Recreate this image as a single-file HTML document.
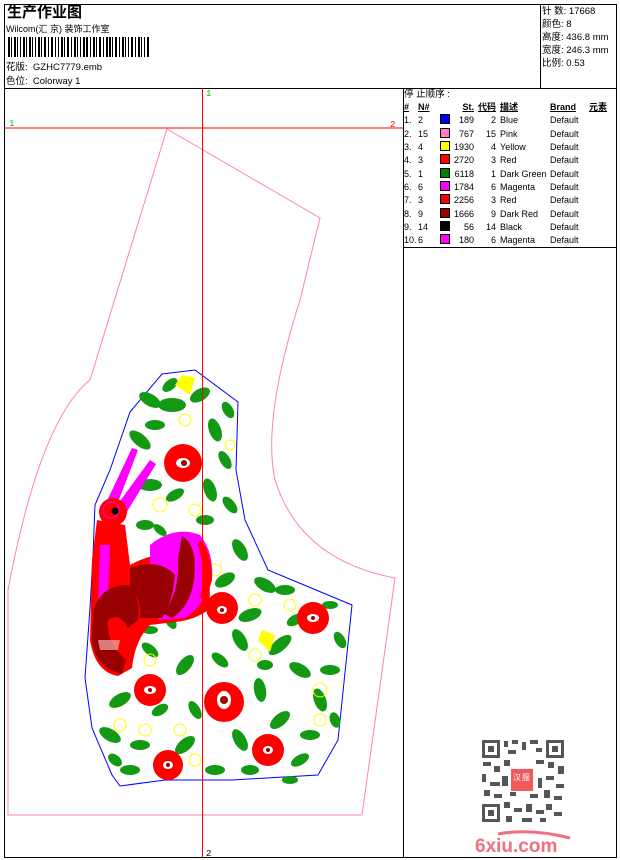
<!DOCTYPE html>
<html><head><meta charset="utf-8"><style>
*{margin:0;padding:0;box-sizing:border-box}
body{width:620px;height:860px;background:#fff;position:relative;overflow:hidden;font-family:"Liberation Sans","Noto Sans CJK SC",sans-serif;font-size:9px;color:#000}
.a{position:absolute;white-space:nowrap}
.ln{position:absolute;background:#000}
table{border-collapse:collapse;font-size:9px}
td{height:13.3px;padding:0;line-height:13px}
.sw{display:inline-block;width:10px;height:10px;border:1px solid #000;vertical-align:-1px}
</style></head><body>
<div class="ln" style="left:4px;top:4px;width:613px;height:1px"></div>
<div class="ln" style="left:4px;top:857px;width:613px;height:1px"></div>
<div class="ln" style="left:4px;top:4px;width:1px;height:854px"></div>
<div class="ln" style="left:616px;top:4px;width:1px;height:854px"></div>
<div class="ln" style="left:4px;top:88px;width:613px;height:1px"></div>
<div class="ln" style="left:540px;top:4px;width:1px;height:84px"></div>
<div class="ln" style="left:403px;top:88px;width:1px;height:770px"></div>
<div class="ln" style="left:403px;top:247px;width:214px;height:1px"></div>

<div class="a" style="left:7px;top:5px;font-size:15px;line-height:16px;font-weight:bold">生产作业图</div>
<div class="a" style="left:6px;top:23px;font-size:9px;line-height:12px">Wilcom(汇 京) 装饰工作室</div>
<svg class="a" style="left:8px;top:37px" width="144" height="20">
<g fill="#000">
<rect x="0" y="0" width="2" height="20"/><rect x="3" y="0" width="1" height="20"/><rect x="6" y="0" width="2" height="20"/><rect x="9" y="0" width="1" height="20"/><rect x="12" y="0" width="1" height="20"/><rect x="15" y="0" width="2" height="20"/><rect x="18" y="0" width="1" height="20"/><rect x="21" y="0" width="2" height="20"/><rect x="24" y="0" width="1" height="20"/><rect x="27" y="0" width="1" height="20"/><rect x="30" y="0" width="2" height="20"/><rect x="33" y="0" width="1" height="20"/><rect x="36" y="0" width="2" height="20"/><rect x="40" y="0" width="1" height="20"/><rect x="43" y="0" width="2" height="20"/><rect x="47" y="0" width="1" height="20"/><rect x="50" y="0" width="1" height="20"/><rect x="53" y="0" width="2" height="20"/><rect x="56" y="0" width="1" height="20"/><rect x="59" y="0" width="2" height="20"/><rect x="63" y="0" width="1" height="20"/><rect x="66" y="0" width="2" height="20"/><rect x="69" y="0" width="1" height="20"/><rect x="72" y="0" width="1" height="20"/><rect x="75" y="0" width="2" height="20"/><rect x="78" y="0" width="2" height="20"/><rect x="82" y="0" width="1" height="20"/><rect x="85" y="0" width="2" height="20"/><rect x="88" y="0" width="1" height="20"/><rect x="91" y="0" width="2" height="20"/><rect x="95" y="0" width="1" height="20"/><rect x="98" y="0" width="2" height="20"/><rect x="101" y="0" width="2" height="20"/><rect x="104" y="0" width="1" height="20"/><rect x="107" y="0" width="2" height="20"/><rect x="111" y="0" width="1" height="20"/><rect x="114" y="0" width="2" height="20"/><rect x="117" y="0" width="1" height="20"/><rect x="120" y="0" width="1" height="20"/><rect x="123" y="0" width="2" height="20"/><rect x="127" y="0" width="1" height="20"/><rect x="130" y="0" width="2" height="20"/><rect x="133" y="0" width="1" height="20"/><rect x="136" y="0" width="1" height="20"/><rect x="139" y="0" width="2" height="20"/>
</g></svg>
<div class="a" style="left:6px;top:62px;font-size:9.5px;line-height:12px">花版:&nbsp; GZHC7779.emb</div>
<div class="a" style="left:6px;top:76px;font-size:9.5px;line-height:12px">色位:&nbsp; Colorway 1</div>

<div class="a" style="left:542px;top:5px;line-height:13px;font-size:9.5px">针 数: 17668<br>颜色: 8<br>高度: 436.8 mm<br>宽度: 246.3 mm<br>比例: 0.53</div>

<div class="a" style="left:404px;top:88px;font-size:9.5px;line-height:13px">停 止顺序 :</div>
<table class="a" style="left:404px;top:101px">
<tr style="font-weight:bold;text-decoration:underline"><td style="width:14px">#</td><td style="width:22px">N#</td><td style="width:14px"></td><td style="width:20px;text-align:right">St.</td><td style="width:22px;text-align:right">代码</td><td style="width:54px;padding-left:4px">描述</td><td style="width:36px">Brand</td><td style="padding-left:3px">元素</td></tr>
<tr><td>1.</td><td>2</td><td><span class="sw" style="background:#0000ff"></span></td><td align=right>189</td><td align=right>2</td><td style="padding-left:4px">Blue</td><td>Default</td><td></td></tr>
<tr><td>2.</td><td>15</td><td><span class="sw" style="background:#ff80c0"></span></td><td align=right>767</td><td align=right>15</td><td style="padding-left:4px">Pink</td><td>Default</td><td></td></tr>
<tr><td>3.</td><td>4</td><td><span class="sw" style="background:#ffff00"></span></td><td align=right>1930</td><td align=right>4</td><td style="padding-left:4px">Yellow</td><td>Default</td><td></td></tr>
<tr><td>4.</td><td>3</td><td><span class="sw" style="background:#ff0000"></span></td><td align=right>2720</td><td align=right>3</td><td style="padding-left:4px">Red</td><td>Default</td><td></td></tr>
<tr><td>5.</td><td>1</td><td><span class="sw" style="background:#008000"></span></td><td align=right>6118</td><td align=right>1</td><td style="padding-left:4px">Dark Green</td><td>Default</td><td></td></tr>
<tr><td>6.</td><td>6</td><td><span class="sw" style="background:#ff00ff"></span></td><td align=right>1784</td><td align=right>6</td><td style="padding-left:4px">Magenta</td><td>Default</td><td></td></tr>
<tr><td>7.</td><td>3</td><td><span class="sw" style="background:#ff0000"></span></td><td align=right>2256</td><td align=right>3</td><td style="padding-left:4px">Red</td><td>Default</td><td></td></tr>
<tr><td>8.</td><td>9</td><td><span class="sw" style="background:#990000"></span></td><td align=right>1666</td><td align=right>9</td><td style="padding-left:4px">Dark Red</td><td>Default</td><td></td></tr>
<tr><td>9.</td><td>14</td><td><span class="sw" style="background:#000"></span></td><td align=right>56</td><td align=right>14</td><td style="padding-left:4px">Black</td><td>Default</td><td></td></tr>
<tr><td>10.</td><td>6</td><td><span class="sw" style="background:#ff00ff"></span></td><td align=right>180</td><td align=right>6</td><td style="padding-left:4px">Magenta</td><td>Default</td><td></td></tr>
</table>

<svg class="a" style="left:0;top:0" width="403" height="860">
<path d="M167,129 L320,218 L300,300 Q262,420 275,480 Q300,560 395,578 L362,815 L8,815 L8,590 Q40,420 90,380 Z" fill="none" stroke="#ff80c0" stroke-width="1"/>
<path d="M162,374 L195,370 L238,402 L236,470 L245,520 L268,570 L352,605 L338,740 L318,775 L232,780 L165,780 L120,786 L112,775 L92,728 L85,678 L90,608 L93,555 L95,505 L110,470 L130,412 Z" fill="none" stroke="#0000ff" stroke-width="1"/>
<g fill="#139913">
<ellipse cx="150" cy="400" rx="12" ry="6" transform="rotate(30 150 400)"/><ellipse cx="172" cy="405" rx="14" ry="7"/><ellipse cx="200" cy="395" rx="11" ry="6" transform="rotate(-30 200 395)"/><ellipse cx="215" cy="430" rx="12" ry="6" transform="rotate(70 215 430)"/><ellipse cx="140" cy="440" rx="13" ry="6" transform="rotate(40 140 440)"/><ellipse cx="155" cy="425" rx="10" ry="5"/><ellipse cx="225" cy="460" rx="10" ry="5" transform="rotate(60 225 460)"/><ellipse cx="150" cy="485" rx="12" ry="6"/><ellipse cx="175" cy="495" rx="10" ry="5" transform="rotate(-30 175 495)"/><ellipse cx="210" cy="490" rx="12" ry="6" transform="rotate(70 210 490)"/><ellipse cx="230" cy="505" rx="10" ry="5" transform="rotate(50 230 505)"/><ellipse cx="145" cy="525" rx="9" ry="5"/><ellipse cx="240" cy="550" rx="12" ry="6" transform="rotate(60 240 550)"/><ellipse cx="225" cy="580" rx="11" ry="6" transform="rotate(-30 225 580)"/><ellipse cx="265" cy="585" rx="12" ry="6" transform="rotate(30 265 585)"/><ellipse cx="285" cy="590" rx="10" ry="5"/><ellipse cx="250" cy="615" rx="12" ry="6" transform="rotate(-20 250 615)"/><ellipse cx="330" cy="605" rx="8" ry="4"/><ellipse cx="240" cy="640" rx="12" ry="6" transform="rotate(60 240 640)"/><ellipse cx="280" cy="645" rx="14" ry="6" transform="rotate(-40 280 645)"/><ellipse cx="300" cy="670" rx="12" ry="6" transform="rotate(30 300 670)"/><ellipse cx="330" cy="670" rx="10" ry="5"/><ellipse cx="320" cy="700" rx="12" ry="6" transform="rotate(70 320 700)"/><ellipse cx="260" cy="690" rx="12" ry="6" transform="rotate(80 260 690)"/><ellipse cx="280" cy="720" rx="12" ry="6" transform="rotate(-40 280 720)"/><ellipse cx="310" cy="735" rx="10" ry="5"/><ellipse cx="220" cy="660" rx="10" ry="5" transform="rotate(40 220 660)"/><ellipse cx="185" cy="665" rx="12" ry="6" transform="rotate(-50 185 665)"/><ellipse cx="150" cy="650" rx="10" ry="5" transform="rotate(40 150 650)"/><ellipse cx="120" cy="700" rx="12" ry="6" transform="rotate(-30 120 700)"/><ellipse cx="110" cy="735" rx="12" ry="6" transform="rotate(30 110 735)"/><ellipse cx="140" cy="745" rx="10" ry="5"/><ellipse cx="185" cy="745" rx="12" ry="6" transform="rotate(-40 185 745)"/><ellipse cx="195" cy="710" rx="10" ry="5" transform="rotate(60 195 710)"/><ellipse cx="240" cy="740" rx="12" ry="6" transform="rotate(60 240 740)"/><ellipse cx="215" cy="770" rx="10" ry="5"/><ellipse cx="130" cy="770" rx="10" ry="5"/><ellipse cx="300" cy="760" rx="10" ry="5" transform="rotate(-30 300 760)"/><ellipse cx="190" cy="555" rx="10" ry="5" transform="rotate(-40 190 555)"/><ellipse cx="170" cy="620" rx="10" ry="5" transform="rotate(60 170 620)"/><ellipse cx="150" cy="630" rx="8" ry="4"/>
<ellipse cx="170" cy="385" rx="9" ry="5" transform="rotate(-40 170 385)"/><ellipse cx="228" cy="410" rx="9" ry="5" transform="rotate(60 228 410)"/><ellipse cx="205" cy="520" rx="9" ry="5"/><ellipse cx="160" cy="530" rx="8" ry="4" transform="rotate(40 160 530)"/><ellipse cx="295" cy="620" rx="9" ry="5" transform="rotate(-30 295 620)"/><ellipse cx="340" cy="640" rx="9" ry="5" transform="rotate(60 340 640)"/><ellipse cx="335" cy="720" rx="8" ry="5" transform="rotate(70 335 720)"/><ellipse cx="160" cy="710" rx="9" ry="5" transform="rotate(-30 160 710)"/><ellipse cx="250" cy="770" rx="9" ry="5"/><ellipse cx="290" cy="780" rx="8" ry="4"/><ellipse cx="115" cy="760" rx="8" ry="5" transform="rotate(40 115 760)"/><ellipse cx="265" cy="665" rx="8" ry="5"/>
</g>
<g fill="none" stroke="#ffff00" stroke-width="1">
<circle cx="185" cy="420" r="6"/><circle cx="160" cy="505" r="7"/><circle cx="195" cy="510" r="6"/><circle cx="215" cy="570" r="6"/><circle cx="255" cy="600" r="6"/><circle cx="290" cy="605" r="6"/><circle cx="255" cy="655" r="6"/><circle cx="320" cy="690" r="7"/><circle cx="150" cy="660" r="6"/><circle cx="120" cy="725" r="6"/><circle cx="145" cy="730" r="6"/><circle cx="180" cy="730" r="6"/><circle cx="195" cy="760" r="6"/><circle cx="320" cy="720" r="6"/><circle cx="230" cy="445" r="5"/>
</g>
<path d="M182,375 L195,378 L190,395 L175,385 Z" fill="#ffff00"/>
<path d="M262,630 L275,635 L270,652 L258,640 Z" fill="#ffff00"/>
<g fill="#ff0000">
<circle cx="183" cy="463" r="19"/><circle cx="222" cy="608" r="16"/><circle cx="313" cy="618" r="16"/><circle cx="150" cy="690" r="16"/><circle cx="224" cy="702" r="20"/><circle cx="268" cy="750" r="16"/><circle cx="168" cy="765" r="15"/>
</g>
<g fill="#fff"><ellipse cx="183" cy="463" rx="7" ry="5"/><ellipse cx="222" cy="610" rx="5" ry="4"/><ellipse cx="313" cy="618" rx="6" ry="4"/><ellipse cx="150" cy="690" rx="6" ry="4"/><ellipse cx="224" cy="700" rx="7" ry="9"/><ellipse cx="268" cy="750" rx="5" ry="4"/><ellipse cx="168" cy="765" rx="5" ry="4"/></g>
<g fill="#990000"><circle cx="184" cy="463" r="3"/><circle cx="222" cy="610" r="2"/><circle cx="313" cy="618" r="2"/><circle cx="150" cy="690" r="2"/><circle cx="224" cy="700" r="4"/><circle cx="268" cy="750" r="2"/><circle cx="168" cy="765" r="2"/></g>
<path d="M105,505 L132,448 L138,450 L115,510 Z" fill="#ff00ff"/>
<path d="M115,508 L150,460 L156,464 L125,515 Z" fill="#ff00ff"/>
<path d="M97,520 L125,525 L130,565 Q160,548 200,555 Q214,580 208,610 Q195,620 175,622 L150,625 Q135,640 132,668 L118,676 Q95,672 90,640 L92,560 Z" fill="#ff0000"/>
<path d="M150,545 Q175,525 200,535 Q214,552 212,580 Q205,605 185,618 L158,620 Q165,590 150,570 Z" fill="#ff00ff"/>
<path d="M182,536 Q198,545 194,580 Q190,607 172,618 L164,614 Q180,590 178,558 Z" fill="#990000"/>
<path d="M200,540 Q212,552 212,580 L206,600 L200,598 Q206,570 198,545 Z" fill="#ff0000"/>
<path d="M130,568 Q160,558 175,575 Q172,605 162,618 L140,618 Q142,598 130,590 Z" fill="#990000"/>
<path d="M100,545 L110,545 L108,600 L98,610 Z" fill="#ff00ff"/>
<path d="M93,612 Q100,585 128,585 Q142,600 138,620 L128,628 Q120,612 108,620 Q105,640 126,660 L122,674 Q95,668 92,640 Z" fill="#990000"/>
<path d="M98,640 L120,640 L118,650 L100,650 Z" fill="#ffcccc" opacity="0.6"/>
<circle cx="113" cy="512" r="14" fill="#ff0000"/>
<circle cx="111" cy="510" r="8" fill="none" stroke="#ff00ff" stroke-width="1"/>
<circle cx="115" cy="511" r="3.5" fill="#000"/>
<line x1="4" y1="128" x2="403" y2="128" stroke="#ff0000" stroke-width="1"/>
<line x1="202.5" y1="88" x2="202.5" y2="858" stroke="#ff0000" stroke-width="1"/>
<text x="206" y="96" fill="#00c000" font-size="9" font-family="Liberation Mono,monospace">1</text>
<text x="9" y="126" fill="#00c000" font-size="9" font-family="Liberation Mono,monospace">1</text>
<text x="390" y="127" fill="#ff0000" font-size="9" font-family="Liberation Mono,monospace">2</text>
<text x="206" y="856" fill="#000" font-size="9" font-family="Liberation Mono,monospace">2</text>
</svg>

<svg class="a" style="left:480px;top:738px" width="86" height="86">
<rect width="86" height="86" fill="#fff"/>
<g fill="#555">
<rect x="2" y="2" width="18" height="18"/><rect x="66" y="2" width="18" height="18"/><rect x="2" y="66" width="18" height="18"/>
</g>
<g fill="#fff"><rect x="5" y="5" width="12" height="12"/><rect x="69" y="5" width="12" height="12"/><rect x="5" y="69" width="12" height="12"/></g>
<g fill="#555"><rect x="8" y="8" width="6" height="6"/><rect x="72" y="8" width="6" height="6"/><rect x="8" y="72" width="6" height="6"/>
<rect x="24" y="3" width="4" height="6"/><rect x="32" y="2" width="6" height="4"/><rect x="42" y="4" width="4" height="8"/><rect x="50" y="2" width="8" height="4"/><rect x="56" y="10" width="6" height="4"/><rect x="28" y="12" width="8" height="4"/>
<rect x="3" y="24" width="8" height="4"/><rect x="14" y="28" width="6" height="6"/><rect x="2" y="36" width="4" height="8"/><rect x="10" y="44" width="10" height="4"/><rect x="4" y="52" width="6" height="6"/><rect x="14" y="56" width="8" height="4"/>
<rect x="24" y="22" width="6" height="6"/><rect x="56" y="22" width="8" height="4"/><rect x="68" y="24" width="6" height="6"/><rect x="78" y="28" width="6" height="8"/><rect x="66" y="38" width="8" height="4"/><rect x="76" y="46" width="8" height="4"/><rect x="64" y="52" width="6" height="8"/><rect x="74" y="58" width="8" height="4"/>
<rect x="24" y="64" width="6" height="6"/><rect x="34" y="70" width="8" height="4"/><rect x="26" y="78" width="6" height="6"/><rect x="46" y="66" width="6" height="8"/><rect x="56" y="72" width="8" height="4"/><rect x="66" y="66" width="6" height="6"/><rect x="74" y="74" width="8" height="4"/><rect x="42" y="80" width="10" height="4"/><rect x="60" y="80" width="6" height="4"/>
<rect x="22" y="38" width="6" height="10"/><rect x="58" y="40" width="4" height="10"/><rect x="30" y="54" width="6" height="4"/><rect x="50" y="56" width="8" height="4"/>
</g>
<rect x="31" y="31" width="22" height="22" fill="#f05a5a"/>
<text x="33" y="42" fill="#fff" font-size="8" font-family="Noto Sans CJK SC,sans-serif">汉</text><text x="42" y="42" fill="#fff" font-size="8" font-family="Noto Sans CJK SC,sans-serif">服</text>
</svg>
<svg class="a" style="left:470px;top:826px" width="110" height="30">
<path d="M28,8 Q60,2 100,12" fill="none" stroke="#f07080" stroke-width="3"/>
<text x="5" y="26" fill="#f0707c" font-size="19" font-weight="bold" font-family="Liberation Sans,sans-serif">6xiu.com</text>
</svg>
</body></html>
